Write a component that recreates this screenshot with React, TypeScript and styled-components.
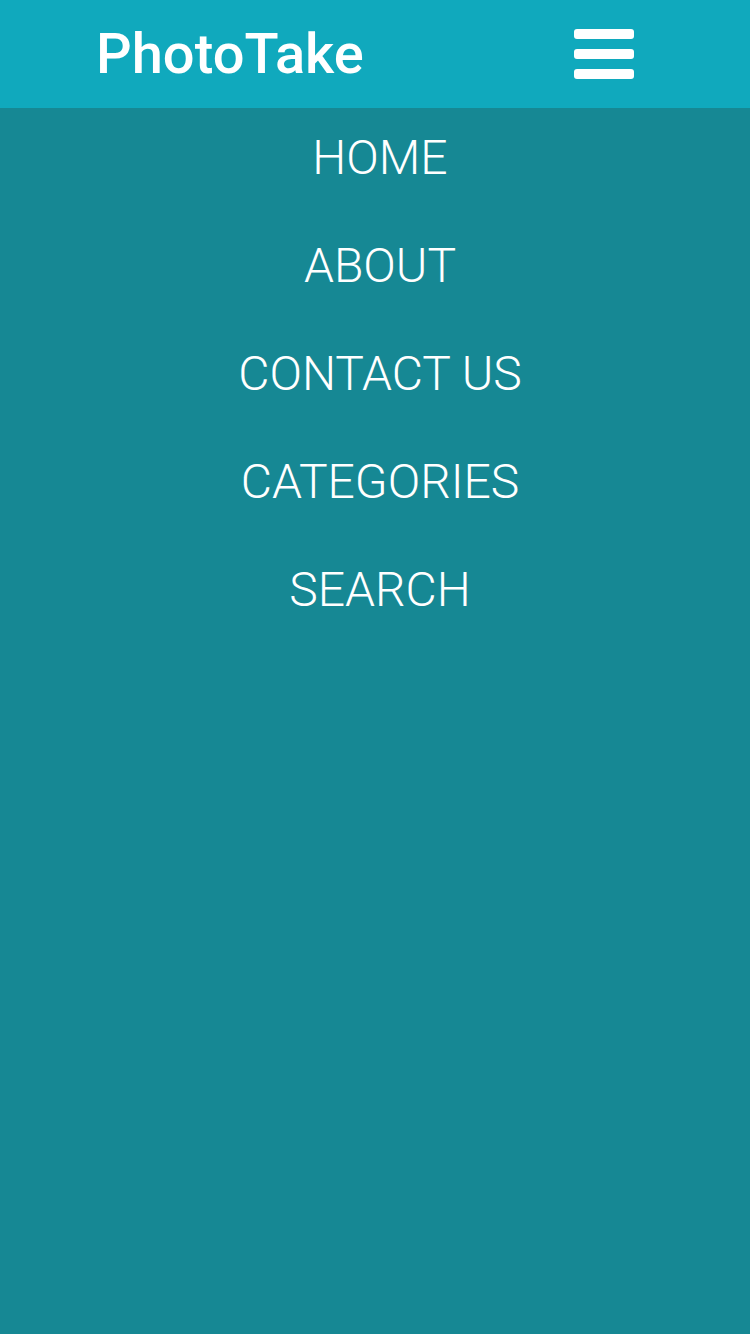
import React from "react";
import styled, { createGlobalStyle } from "styled-components";

const Global = createGlobalStyle`
  html, body {
    margin: 0;
    padding: 0;
    background: #168894;
    font-family: Roboto, "Liberation Sans", sans-serif;
  }
  * { box-sizing: border-box; }
`;

const Page = styled.div`
  min-height: 1334px;
  width: 750px;
  background: #168894;
  display: flex;
  flex-direction: column;
`;

const Header = styled.header`
  height: 108px;
  background: #10a9bd;
  display: flex;
  align-items: center;
  justify-content: space-between;
  padding: 0 116px 0 96px;
`;

const Brand = styled.h1`
  margin: 0;
  color: #ffffff;
  font-family: Roboto, "Liberation Sans", sans-serif;
  font-weight: 500;
  font-size: 56px;
  line-height: normal;
  letter-spacing: 0;
`;

const Burger = styled.button`
  width: 60px;
  height: 50px;
  padding: 0;
  border: 0;
  background: transparent;
  display: flex;
  flex-direction: column;
  justify-content: space-between;
  cursor: pointer;
`;

const Bar = styled.span`
  display: block;
  width: 60px;
  height: 10px;
  border-radius: 3px;
  background: #ffffff;
`;

const Menu = styled.nav`
  display: flex;
  flex-direction: column;
  align-items: center;
  gap: 52px;
  padding: 22px 0 0 10px;
`;

const MenuItem = styled.a`
  color: #ffffff;
  text-decoration: none;
  font-family: Roboto, "Liberation Sans", sans-serif;
  font-weight: 300;
  font-size: 48px;
  line-height: 56px;
  text-transform: uppercase;
`;

const items = ["Home", "About", "Contact Us", "Categories", "Search"];

export default function App() {
  return (
    <>
      <Global />
      <Page>
        <Header>
          <Brand>PhotoTake</Brand>
          <Burger aria-label="menu">
            <Bar />
            <Bar />
            <Bar />
          </Burger>
        </Header>
        <Menu>
          {items.map((t) => (
            <MenuItem key={t} href="#">
              {t}
            </MenuItem>
          ))}
        </Menu>
      </Page>
    </>
  );
}
